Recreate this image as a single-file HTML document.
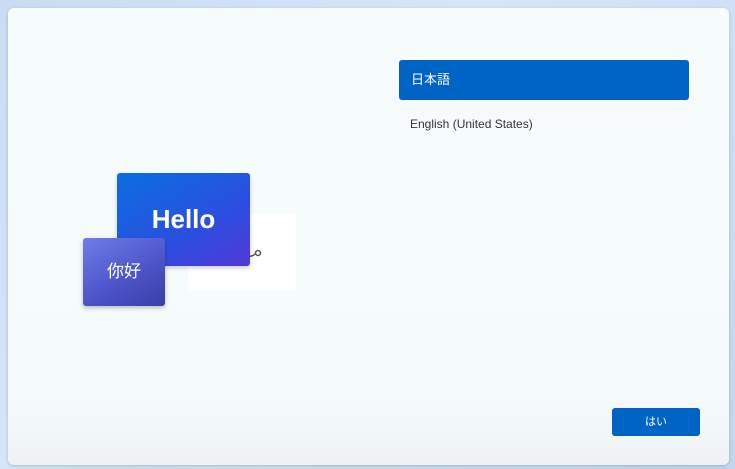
<!DOCTYPE html>
<html><head><meta charset="utf-8"><style>
*{margin:0;padding:0;box-sizing:border-box}
body{width:735px;height:469px;overflow:hidden;background:linear-gradient(135deg,#c9dcf3,#d6e6f8 40%,#c4d6ef);font-family:"Liberation Sans","Noto Sans CJK JP",sans-serif;position:relative}
.panel{position:absolute;left:8px;top:8px;width:721px;height:457px;background:linear-gradient(180deg,#f7fcfd 0%,#f5fbfc 85%,#eef2f3 100%);border-radius:6px;box-shadow:0 1px 3px rgba(0,0,0,.2)}
.sel{position:absolute;left:399px;top:60px;width:290px;height:40px;background:#0063c6;border-radius:3px;color:#fff;font-size:13px;line-height:40px;padding-left:12px}
.en{position:absolute;left:410px;top:117px;font-size:12px;color:#333}
.btn{position:absolute;left:612px;top:408px;width:88px;height:28px;background:#0063c6;border-radius:3px;color:#fff;font-size:11px;text-align:center;line-height:28px}
.wb{position:absolute;left:188px;top:214px;width:108px;height:76px;background:#fff}
.hello{position:absolute;left:117px;top:173px;width:133px;height:93px;border-radius:3px;background:linear-gradient(150deg,#0a6fe0,#2b4fe0 60%,#5338d6);color:#fff;font-size:26px;font-weight:bold;text-align:center;line-height:93px;box-shadow:0 2px 4px rgba(0,0,0,.2)}
.ni{position:absolute;left:83px;top:238px;width:82px;height:68px;border-radius:3px;background:linear-gradient(150deg,#6e7ee8,#4b52c6 60%,#3a3fa8);color:#fff;font-size:17px;text-align:center;line-height:68px;box-shadow:0 2px 4px rgba(0,0,0,.25)}
</style></head><body>
<div class="panel"></div>
<div class="wb"></div>
<svg style="position:absolute;left:246px;top:248px" width="20" height="12"><path d="M2 8 Q6 9 9 6" stroke="#556" stroke-width="1.5" fill="none"/><circle cx="12" cy="5" r="2.5" stroke="#556" stroke-width="1.5" fill="none"/></svg>
<div class="hello">Hello</div>
<div class="ni">你好</div>
<div class="sel">日本語</div>
<div class="en">English (United States)</div>
<div class="btn">はい</div>
</body></html>
